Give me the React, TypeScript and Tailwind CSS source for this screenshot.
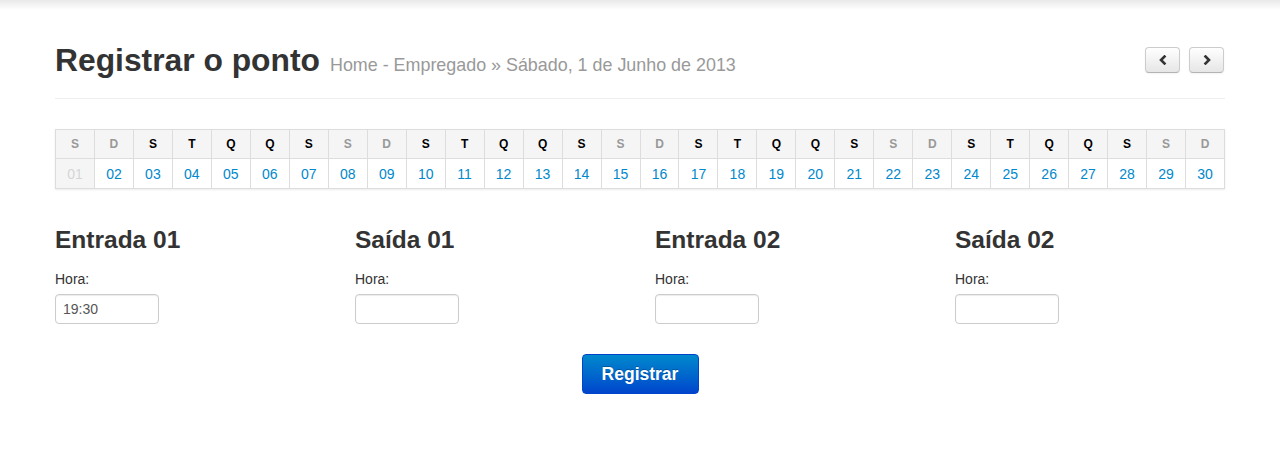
const days = ["S", "D", "S", "T", "Q", "Q", "S"];

const calendar = Array.from({ length: 30 }, (_, i) => {
  const letter = days[i % 7];
  const weekend = i % 7 === 0 || i % 7 === 1;
  return { day: String(i + 1).padStart(2, "0"), letter, weekend };
});

const slots = [
  { title: "Entrada 01", value: "19:30" },
  { title: "Saída 01", value: "" },
  { title: "Entrada 02", value: "" },
  { title: "Saída 02", value: "" },
];

function Chevron({ dir }: { dir: "left" | "right" }) {
  return (
    <svg width="10" height="10" viewBox="0 0 10 10" className="text-[#333]">
      <path
        d={dir === "left" ? "M6.5 1.5 L3 5 L6.5 8.5" : "M3.5 1.5 L7 5 L3.5 8.5"}
        fill="none"
        stroke="currentColor"
        strokeWidth="2.6"
        strokeLinecap="square"
      />
    </svg>
  );
}

function NavButton({ dir }: { dir: "left" | "right" }) {
  return (
    <button className="flex h-[26px] w-[35px] items-center justify-center rounded-[4px] border border-[#ccc] border-b-[#b3b3b3] bg-gradient-to-b from-white to-[#e6e6e6] shadow-[inset_0_1px_0_rgba(255,255,255,0.2),0_1px_2px_rgba(0,0,0,0.05)]">
      <Chevron dir={dir} />
    </button>
  );
}

export default function App() {
  return (
    <div className="min-h-[462px] bg-white font-['Liberation_Sans',Arial,sans-serif] text-[14px] leading-5 text-[#333]">
      <div className="h-[10px] bg-gradient-to-b from-[#e9e9e9] to-white" />
      <div className="mx-auto w-[1170px]">
        {/* page header */}
        <div className="mt-[30px] flex items-start justify-between border-b border-[#eee] pb-[13px]">
          <h2 className="text-[31.8px] font-bold leading-[40px] text-[#333]">
            Registrar o ponto
            <span className="ml-[10px] text-[17.9px] font-normal text-[#999]">
              Home - Empregado » Sábado, 1 de Junho de 2013
            </span>
          </h2>
          <div className="mt-[7px] mr-px flex gap-[9px]">
            <NavButton dir="left" />
            <NavButton dir="right" />
          </div>
        </div>

        {/* month strip */}
        <div className="mt-[30px] grid grid-cols-[repeat(30,minmax(0,1fr))] border-l border-t border-[#ddd] shadow-[0_1px_2px_rgba(0,0,0,0.08)]">
          {calendar.map((c) => (
            <div
              key={"h" + c.day}
              className={
                "flex h-[29px] items-center justify-center border-b border-r border-[#ddd] bg-[#f5f5f5] text-[12px] font-bold " +
                (c.weekend ? "text-[#999]" : "text-black")
              }
            >
              {c.letter}
            </div>
          ))}
          {calendar.map((c, i) => (
            <div
              key={"d" + c.day}
              className={
                "flex h-[30px] items-center justify-center border-b border-r border-[#ddd] text-[14px] " +
                (i === 0 ? "bg-[#f5f5f5] text-[#d5d5d5]" : "bg-white text-[#0088cc]")
              }
            >
              {c.day}
            </div>
          ))}
        </div>

        {/* time slots */}
        <div className="mt-[31px] grid grid-cols-4 gap-[30px]">
          {slots.map((s) => (
            <div key={s.title}>
              <h3 className="text-[24.5px] font-bold leading-[40px] text-[#333]">{s.title}</h3>
              <label className="mt-[9px] block text-[14px] leading-5 text-[#333]">Hora:</label>
              <input
                defaultValue={s.value}
                className="mt-[5px] h-[30px] w-[104px] rounded-[4px] border border-[#ccc] px-[7px] text-[14px] text-[#555] shadow-[inset_0_1px_1px_rgba(0,0,0,0.075)] outline-none"
              />
            </div>
          ))}
        </div>

        <div className="mt-[30px] flex justify-center">
          <button className="h-[40px] w-[117px] rounded-[4px] border border-[#0044cc] bg-gradient-to-b from-[#0088cc] to-[#0044cc] text-[17.5px] font-bold text-white [text-shadow:0_-1px_0_rgba(0,0,0,0.25)]">
            Registrar
          </button>
        </div>
      </div>
    </div>
  );
}
